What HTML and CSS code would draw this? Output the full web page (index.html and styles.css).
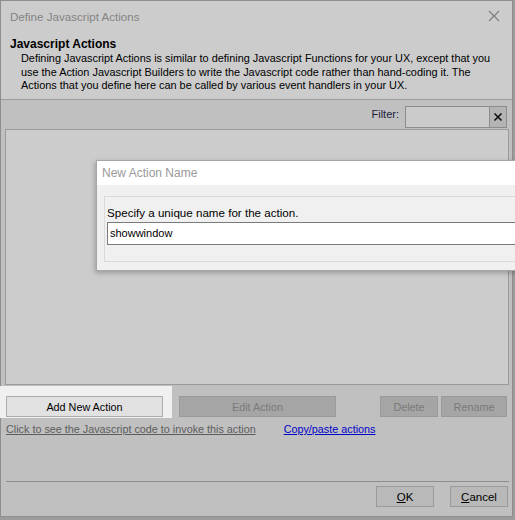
FILE: index.html
```html
<!DOCTYPE html>
<html>
<head>
<meta charset="utf-8">
<link rel="stylesheet" href="styles.css">
</head>
<body>
<div class="dialog">
  <div class="titlebar">
    <span class="title">Define Javascript Actions</span>
    <svg class="close" width="12" height="12" viewBox="0 0 12 12"><path d="M1 1L11 11M11 1L1 11" stroke="#7c7c7c" stroke-width="1.1" fill="none"/></svg>
  </div>
  <div class="header">
    <div class="h-title">Javascript Actions</div>
    <div class="h-desc">Defining Javascript Actions is similar to defining Javascript Functions for your UX, except that you use the Action Javascript Builders to write the Javascript code rather than hand-coding it. The Actions that you define here can be called by various event handlers in your UX.</div>
  </div>
  <div class="main">
    <div class="filter-row">
      <span class="filter-label">Filter:</span>
      <div class="filter-box"><div class="filter-input"></div><div class="filter-clear"><svg width="10" height="10" viewBox="0 0 10 10"><path d="M1.5 1.5L8.5 8.5M8.5 1.5L1.5 8.5" stroke="#111" stroke-width="1.6" fill="none"/></svg></div></div>
    </div>
    <div class="list"></div>
    <div class="action-row">
      <div class="spot"><button class="btn add">Add New Action</button></div>
      <button class="btn dis edit">Edit Action</button>
      <div class="spacer"></div>
      <button class="btn dis del">Delete</button>
      <button class="btn dis ren">Rename</button>
    </div>
    <div class="links">
      <span class="link-grey">Click to see the Javascript code to invoke this action</span>
      <span class="link-blue">Copy/paste actions</span>
    </div>
    <div class="fill"></div>
    <div class="footer">
      <button class="btn foot"><u>O</u>K</button>
      <button class="btn foot"><u>C</u>ancel</button>
    </div>
  </div>
  <div class="popup">
    <div class="p-title">New Action Name</div>
    <div class="p-body">
      <div class="p-group">
        <div class="p-label">Specify a unique name for the action.</div>
        <div class="p-input">showwindow</div>
      </div>
    </div>
  </div>
</div>
</body>
</html>
```
FILE: styles.css
```css
html, body {
  margin: 0;
  padding: 0;
  width: 515px;
  height: 520px;
  overflow: hidden;
  background: #9c9c9c;
  font-family: "Liberation Sans", Arial, sans-serif;
  font-size: 11px;
}
.dialog {
  position: relative;
  width: 511px;
  height: 515px;
  border: 1px solid #8e8e8e;
  display: flex;
  flex-direction: column;
  background: #c0c0c0;
}
.titlebar {
  height: 33px;
  background: #cccccc;
  display: flex;
  align-items: center;
  justify-content: space-between;
  padding: 0 10px 0 9px;
}
.title {
  color: #848484;
  font-size: 11.6px;
  margin-top: -2px;
}
.close { margin-top: -3px; margin-right: 2px; }
.header {
  background: #cccccc;
  padding: 2px 10px 0 9px;
  height: 63px;
  border-bottom: 1px solid #9c9c9c;
}
.h-title {
  font-weight: bold;
  font-size: 12px;
  color: #000;
  line-height: 16px;
}
.h-desc {
  padding-left: 11px;
  line-height: 13.5px;
  font-size: 10.9px;
  color: #000;
}
.main {
  flex: 1;
  display: flex;
  flex-direction: column;
  padding: 0 3px 0 3px;
}
.filter-row {
  display: flex;
  justify-content: flex-end;
  align-items: center;
  height: 29px;
  padding-right: 2px;
}
.filter-label {
  color: #1c1c3c;
  margin-right: 6px;
  margin-top: -1px;
  font-size: 11px;
}
.filter-box {
  display: flex;
  height: 20px;
  border: 1px solid #8c8c8c;
  margin-top: 5px;
}
.filter-input {
  width: 83px;
  background: #cbcbcb;
  border-right: 1px solid #8c8c8c;
}
.filter-clear {
  width: 16px;
  background: #b4b4b4;
  display: flex;
  align-items: center;
  justify-content: center;
}
.list {
  height: 254px;
  margin: 0 0 0 1px;
  border: 1px solid #9a9a9a;
  background: #cccccc;
}
.action-row {
  display: flex;
  align-items: flex-end;
  margin-left: -4px;
  height: 33px;
}
.spot {
  background: #f0f0f0;
  padding: 10px 9px 1px 6px;
}
.btn {
  font-family: inherit;
  font-size: 10.8px;
  height: 21px;
  padding: 0;
  margin: 0;
}
.add {
  width: 157px;
  background: #e1e1e1;
  border: 1px solid #adadad;
  color: #000;
}
.dis {
  background: #a5a5a5;
  border: 1px solid #9a9a9a;
  color: #7a7a7a;
  margin-bottom: 1px;
}
.edit { width: 157px; margin-left: 7px; }
.spacer { flex: 1; }
.del { width: 58px; }
.ren { width: 66px; margin-left: 3px; margin-right: 2px; }
.links {
  display: flex;
  padding-left: 2px;
  margin-top: 4px;
  line-height: 14px;
  font-size: 10.8px;
}
.link-grey {
  color: #5c5c5c;
  text-decoration: underline;
}
.link-blue {
  color: #0000c8;
  text-decoration: underline;
  margin-left: 28px;
}
.fill { flex: 1; }
.footer {
  border-top: 1px solid #8e8e8e;
  margin: 0 0 0 2px;
  padding: 4px 1px 9px 0;
  display: flex;
  justify-content: flex-end;
  gap: 16px;
}
.foot {
  width: 58px;
  background: #b9b9b9;
  border: 1px solid #9a9a9a;
  color: #000;
  font-size: 11.5px;
}
.popup {
  position: absolute;
  left: 95px;
  top: 159px;
  width: 440px;
  border: 1px solid #a6a6a6;
  background: #f0f0f0;
  box-shadow: -1px 2px 5px rgba(0,0,0,0.25);
}
.p-title {
  background: #ffffff;
  height: 24px;
  line-height: 24px;
  padding-left: 5px;
  color: #9a9a9a;
  font-size: 12px;
}
.p-body {
  padding: 11px 0 8px 7px;
}
.p-group {
  border: 1px solid #dadada;
  border-right: none;
  padding: 9px 0 16px 2px;
}
.p-label {
  color: #000;
  line-height: 14px;
  margin-bottom: 2px;
  font-size: 11.6px;
}
.p-input {
  background: #fff;
  border: 1px solid #7a7a7a;
  border-right: none;
  height: 21px;
  line-height: 21px;
  padding-left: 2px;
  font-size: 11px;
}
```
